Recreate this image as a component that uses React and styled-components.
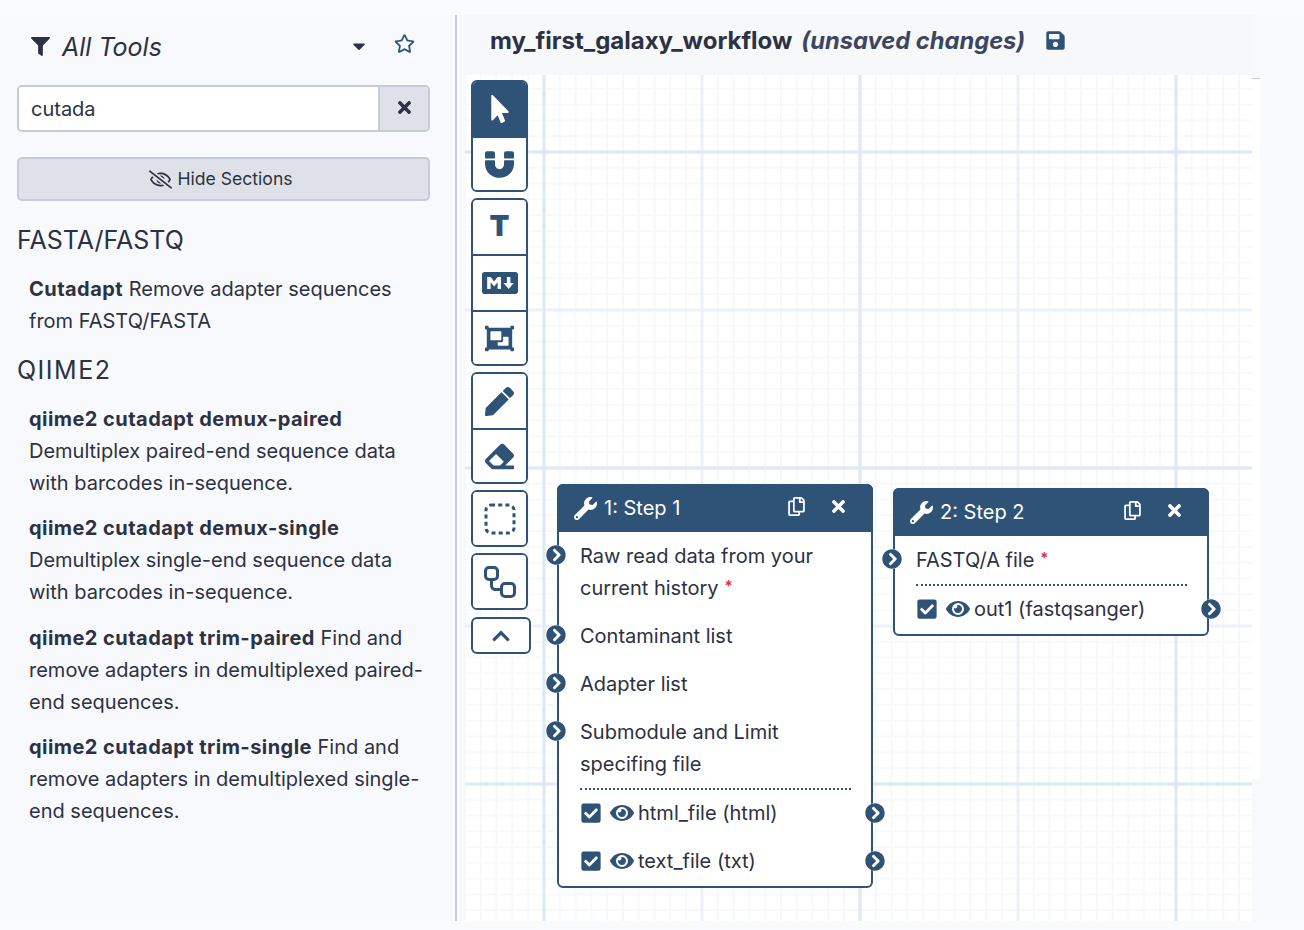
import React from "react";
import styled, { createGlobalStyle } from "styled-components";
import {
  FaFilter,
  FaRegStar,
  FaCaretDown,
  FaTimes,
  FaRegEyeSlash,
  FaMousePointer,
  FaMagnet,
  FaMarkdown,
  FaObjectGroup,
  FaPen,
  FaEraser,
  FaChevronUp,
  FaWrench,
  FaRegCopy,
  FaChevronCircleRight,
  FaEye,
  FaCheckSquare,
  FaSave,
} from "react-icons/fa";

const brand = "#2f5277";
const ink = "#2c3143";

const GlobalStyle = createGlobalStyle`
  html, body {
    margin: 0;
    padding: 0;
    background: #fafbfc;
  }
  * {
    box-sizing: border-box;
  }
`;

const Page = styled.div`
  width: 1304px;
  height: 930px;
  padding: 15px 0 9px;
  overflow: hidden;
  font-family: Inter, "Liberation Sans", sans-serif;
  font-size: 20px;
  line-height: 32px;
  color: ${ink};
`;

const Main = styled.div`
  display: flex;
  height: 906px;
  background: #f8f9fc;
`;

const Sidebar = styled.aside`
  width: 457px;
  padding: 0 25px 0 17px;
  border-right: 2px solid #c5ccd8;
`;

const PanelHeader = styled.div`
  display: flex;
  align-items: center;
  height: 70px;
  padding: 0 15px 7px 14px;
`;

const PanelTitle = styled.h1`
  flex: 1;
  margin: 0 0 0 12px;
  font-size: 25px;
  font-weight: 400;
  font-style: italic;
`;

const IconSlot = styled.span`
  display: inline-flex;
  color: ${(p) => p.$color || "inherit"};
  margin-left: ${(p) => p.$gap || 0}px;
  margin-top: ${(p) => p.$lift || 0}px;
`;

const SearchGroup = styled.div`
  display: flex;
  height: 47px;
  border: 2px solid #c5ccd8;
  border-radius: 5px;
  overflow: hidden;
`;

const SearchInput = styled.input`
  flex: 1;
  min-width: 0;
  padding: 0 12px;
  border: 0;
  outline: 0;
  background: #fff;
  font: inherit;
  color: ${ink};
`;

const SearchClear = styled.span`
  display: flex;
  align-items: center;
  justify-content: center;
  width: 50px;
  padding-bottom: 3px;
  background: #dee2e8;
  border-left: 2px solid #c5ccd8;
`;

const SectionToggle = styled.button`
  display: flex;
  align-items: center;
  justify-content: center;
  gap: 5px;
  width: 100%;
  height: 44px;
  margin-top: 25px;
  padding: 0 5px 0 0;
  background: #dee2e8;
  border: 2px solid #c5ccd8;
  border-radius: 5px;
  font: inherit;
  font-size: 17.6px;
  color: ${ink};
`;

const SectionTitle = styled.h2`
  margin: ${(p) => p.$top}px 0 18px;
  font-size: 25px;
  line-height: 30px;
  font-weight: 400;
  letter-spacing: ${(p) => p.$spread || 0}px;
`;

const ToolItem = styled.p`
  margin: 0 0 13.3px;
  padding-left: 12px;
`;

const ToolName = styled.b`
  font-weight: 700;
  letter-spacing: 0.45px;
`;

const Workspace = styled.section`
  width: 787px;
  margin-left: 8px;
  display: flex;
  flex-direction: column;
`;

const WorkflowHeader = styled.header`
  display: flex;
  align-items: center;
  height: 60px;
  padding: 0 0 9px 25px;
  background: #f6f8fa;
  font-size: 24px;
  font-weight: 700;
`;

const Unsaved = styled.em`
  margin-left: 9px;
  font-size: 23.7px;
  color: #3d4660;
`;

const Canvas = styled.div`
  position: relative;
  flex: 1;
  background-color: #fff;
  background-image: linear-gradient(to right, #e0eaf5 3px, transparent 3px),
    linear-gradient(to bottom, #e0eaf5 3px, transparent 3px),
    linear-gradient(to right, #ebf1f8 3px, transparent 3px),
    linear-gradient(to bottom, #ebf1f8 3px, transparent 3px),
    linear-gradient(to right, #f6f8fc 2px, transparent 2px),
    linear-gradient(to bottom, #f7f9fc 2px, transparent 2px);
  background-size: 316px 316px, 316px 316px, 158px 158px, 158px 158px,
    15.8px 15.8px, 15.8px 15.8px;
  background-position: 77.5px 0, 0 75.5px, 77.5px 0, 0 75.5px, 14.8px 0,
    0 12.8px;
`;

const EdgeStrip = styled.div`
  position: absolute;
  left: 787px;
  top: 3px;
  width: 8px;
  height: 701px;
  background: #fff;
  border-top: 1px solid #c9ccd0;
`;

const Toolbar = styled.div`
  position: absolute;
  left: 6px;
  top: 5px;
  display: flex;
  flex-direction: column;
  align-items: flex-start;
  gap: 6px;
`;

const ToolGroup = styled.div`
  display: flex;
  flex-direction: column;
  width: 57px;
  border: 2px solid ${brand};
  border-radius: 6px;
  overflow: hidden;
  background: #fff;
`;

const ToolButton = styled.div`
  display: flex;
  align-items: center;
  justify-content: center;
  height: ${(p) => (p.$single ? 53 : 54)}px;
  color: ${(p) => (p.$active ? "#fff" : brand)};
  background: ${(p) => (p.$active ? brand : "#fff")};
  & + & {
    border-top: 2px solid ${brand};
  }
  & + &:not(:last-child) {
    height: 56px;
  }
`;

const ToolLetter = styled.span`
  margin-top: -3px;
  font-size: 29px;
  font-weight: 900;
  line-height: 1;
`;

const CollapseButton = styled.div`
  display: flex;
  align-items: center;
  justify-content: center;
  width: 60px;
  height: 37px;
  margin-top: 1px;
  border: 2px solid ${brand};
  border-radius: 6px;
  background: #fff;
  color: ${brand};
`;

const Node = styled.article`
  position: absolute;
  left: ${(p) => p.$x}px;
  top: ${(p) => p.$y}px;
  width: 316px;
  background: #fff;
  border: 2px solid ${brand};
  border-radius: 6px;
`;

const NodeHeader = styled.div`
  display: flex;
  align-items: center;
  height: 48px;
  margin: -2px -2px 0;
  padding: 0 25px 0 17px;
  color: #fff;
  background: ${brand};
  border-radius: 6px 6px 0 0;
`;

const NodeTitle = styled.span`
  flex: 1;
  margin-left: 7px;
`;

const NodeBody = styled.div`
  padding: 8px 20px 9px 21px;
`;

const Row = styled.div`
  position: relative;
  display: flex;
  align-items: center;
  flex-wrap: wrap;
  & + & {
    margin-top: 16px;
  }
`;

const RowText = styled.span`
  display: block;
`;

const Required = styled.sup`
  margin-left: 6px;
  font-size: 15px;
  font-weight: 600;
  line-height: 0;
  color: #e02d2d;
  vertical-align: 4px;
`;

const Port = styled.span`
  position: absolute;
  top: ${(p) => (p.$out ? 6 : 5)}px;
  ${(p) => (p.$out ? "right: -34px;" : "left: -34px;")}
  display: flex;
  width: 20px;
  height: 20px;
  color: ${brand};
  background: #fff;
  border-radius: 50%;
`;

const Divider = styled.hr`
  height: 0;
  margin: 8px 0 7px;
  border: 0;
  border-top: 2px dotted ${brand};
`;

const OutputEye = styled.span`
  display: inline-flex;
  margin: 0 4px 0 8px;
  color: ${brand};
`;

const CheckBox = styled.span`
  display: inline-flex;
  color: ${brand};
`;

const InputPort = () => (
  <Port>
    <FaChevronCircleRight size={20} />
  </Port>
);

const OutputPort = () => (
  <Port $out>
    <FaChevronCircleRight size={20} />
  </Port>
);

const Output = ({ label }) => (
  <Row>
    <CheckBox>
      <FaCheckSquare size={22} />
    </CheckBox>
    <OutputEye>
      <FaEye size={24} />
    </OutputEye>
    <span>{label}</span>
    <OutputPort />
  </Row>
);

const NodeHead = ({ title }) => (
  <NodeHeader>
    <FaWrench size={23} />
    <NodeTitle>{title}</NodeTitle>
    <IconSlot $lift={-3}>
      <FaRegCopy size={19} />
    </IconSlot>
    <IconSlot $gap={23} $lift={-3}>
      <FaTimes size={19} />
    </IconSlot>
  </NodeHeader>
);

const DashedBox = () => (
  <svg width="32" height="32" viewBox="0 0 32 32" fill="none">
    <rect
      x="2"
      y="2"
      width="28"
      height="28"
      rx="5"
      stroke={brand}
      strokeWidth="3"
      strokeDasharray="4 3.2"
    />
  </svg>
);

const ConnectedBoxes = () => (
  <svg width="32" height="32" viewBox="0 0 32 32" fill="none" stroke={brand} strokeWidth="3">
    <rect x="1.5" y="1.5" width="12" height="12" rx="3.5" />
    <rect x="17.5" y="17.5" width="13" height="13" rx="3.5" />
    <path d="M7.5 13.5v6a4 4 0 0 0 4 4h6" />
  </svg>
);

const tools = [
  {
    name: "qiime2 cutadapt demux-paired",
    text: "Demultiplex paired-end sequence data with barcodes in-sequence.",
  },
  {
    name: "qiime2 cutadapt demux-single",
    text: "Demultiplex single-end sequence data with barcodes in-sequence.",
  },
  {
    name: "qiime2 cutadapt trim-paired",
    text: "Find and remove adapters in demultiplexed paired-end sequences.",
  },
  {
    name: "qiime2 cutadapt trim-single",
    text: "Find and remove adapters in demultiplexed single-end sequences.",
  },
];

export default function App() {
  return (
    <Page>
      <GlobalStyle />
      <Main>
        <Sidebar>
          <PanelHeader>
            <FaFilter size={19} />
            <PanelTitle>All Tools</PanelTitle>
            <IconSlot $lift={-2}>
              <FaCaretDown size={20} />
            </IconSlot>
            <IconSlot $gap={25} $color={brand} $lift={-6}>
              <FaRegStar size={21} />
            </IconSlot>
          </PanelHeader>
          <SearchGroup>
            <SearchInput defaultValue="cutada" readOnly />
            <SearchClear>
              <FaTimes size={19} />
            </SearchClear>
          </SearchGroup>
          <SectionToggle>
            <FaRegEyeSlash size={23} />
            Hide Sections
          </SectionToggle>
          <SectionTitle $top={24}>FASTA/FASTQ</SectionTitle>
          <ToolItem>
            <ToolName>Cutadapt</ToolName> Remove adapter sequences from FASTQ/FASTA
          </ToolItem>
          <SectionTitle $top={18} $spread={1.5}>
            QIIME2
          </SectionTitle>
          {tools.map((tool) => (
            <ToolItem key={tool.name}>
              <ToolName>{tool.name}</ToolName> {tool.text}
            </ToolItem>
          ))}
        </Sidebar>
        <Workspace>
          <WorkflowHeader>
            my_first_galaxy_workflow
            <Unsaved>(unsaved changes)</Unsaved>
            <IconSlot $gap={20} $color={brand}>
              <FaSave size={21} />
            </IconSlot>
          </WorkflowHeader>
          <Canvas>
            <EdgeStrip />
            <Toolbar>
              <ToolGroup>
                <ToolButton $active>
                  <FaMousePointer size={28} />
                </ToolButton>
                <ToolButton>
                  <FaMagnet size={29} />
                </ToolButton>
              </ToolGroup>
              <ToolGroup>
                <ToolButton>
                  <ToolLetter>T</ToolLetter>
                </ToolButton>
                <ToolButton>
                  <FaMarkdown size={36} />
                </ToolButton>
                <ToolButton>
                  <FaObjectGroup size={29} />
                </ToolButton>
              </ToolGroup>
              <ToolGroup>
                <ToolButton>
                  <FaPen size={29} />
                </ToolButton>
                <ToolButton>
                  <FaEraser size={29} />
                </ToolButton>
              </ToolGroup>
              <ToolGroup>
                <ToolButton $single>
                  <DashedBox />
                </ToolButton>
              </ToolGroup>
              <ToolGroup>
                <ToolButton $single>
                  <ConnectedBoxes />
                </ToolButton>
              </ToolGroup>
              <CollapseButton>
                <FaChevronUp size={20} />
              </CollapseButton>
            </Toolbar>

            <Node $x={92} $y={409}>
              <NodeHead title="1: Step 1" />
              <NodeBody>
                <Row>
                  <RowText>
                    Raw read data from your current history
                    <Required>*</Required>
                  </RowText>
                  <InputPort />
                </Row>
                <Row>
                  <RowText>Contaminant list</RowText>
                  <InputPort />
                </Row>
                <Row>
                  <RowText>Adapter list</RowText>
                  <InputPort />
                </Row>
                <Row>
                  <RowText>Submodule and Limit specifing file</RowText>
                  <InputPort />
                </Row>
                <Divider />
                <Output label="html_file (html)" />
                <Output label="text_file (txt)" />
              </NodeBody>
            </Node>

            <Node $x={428} $y={413}>
              <NodeHead title="2: Step 2" />
              <NodeBody>
                <Row>
                  <RowText>
                    FASTQ/A file
                    <Required>*</Required>
                  </RowText>
                  <InputPort />
                </Row>
                <Divider />
                <Output label="out1 (fastqsanger)" />
              </NodeBody>
            </Node>
          </Canvas>
        </Workspace>
      </Main>
    </Page>
  );
}
